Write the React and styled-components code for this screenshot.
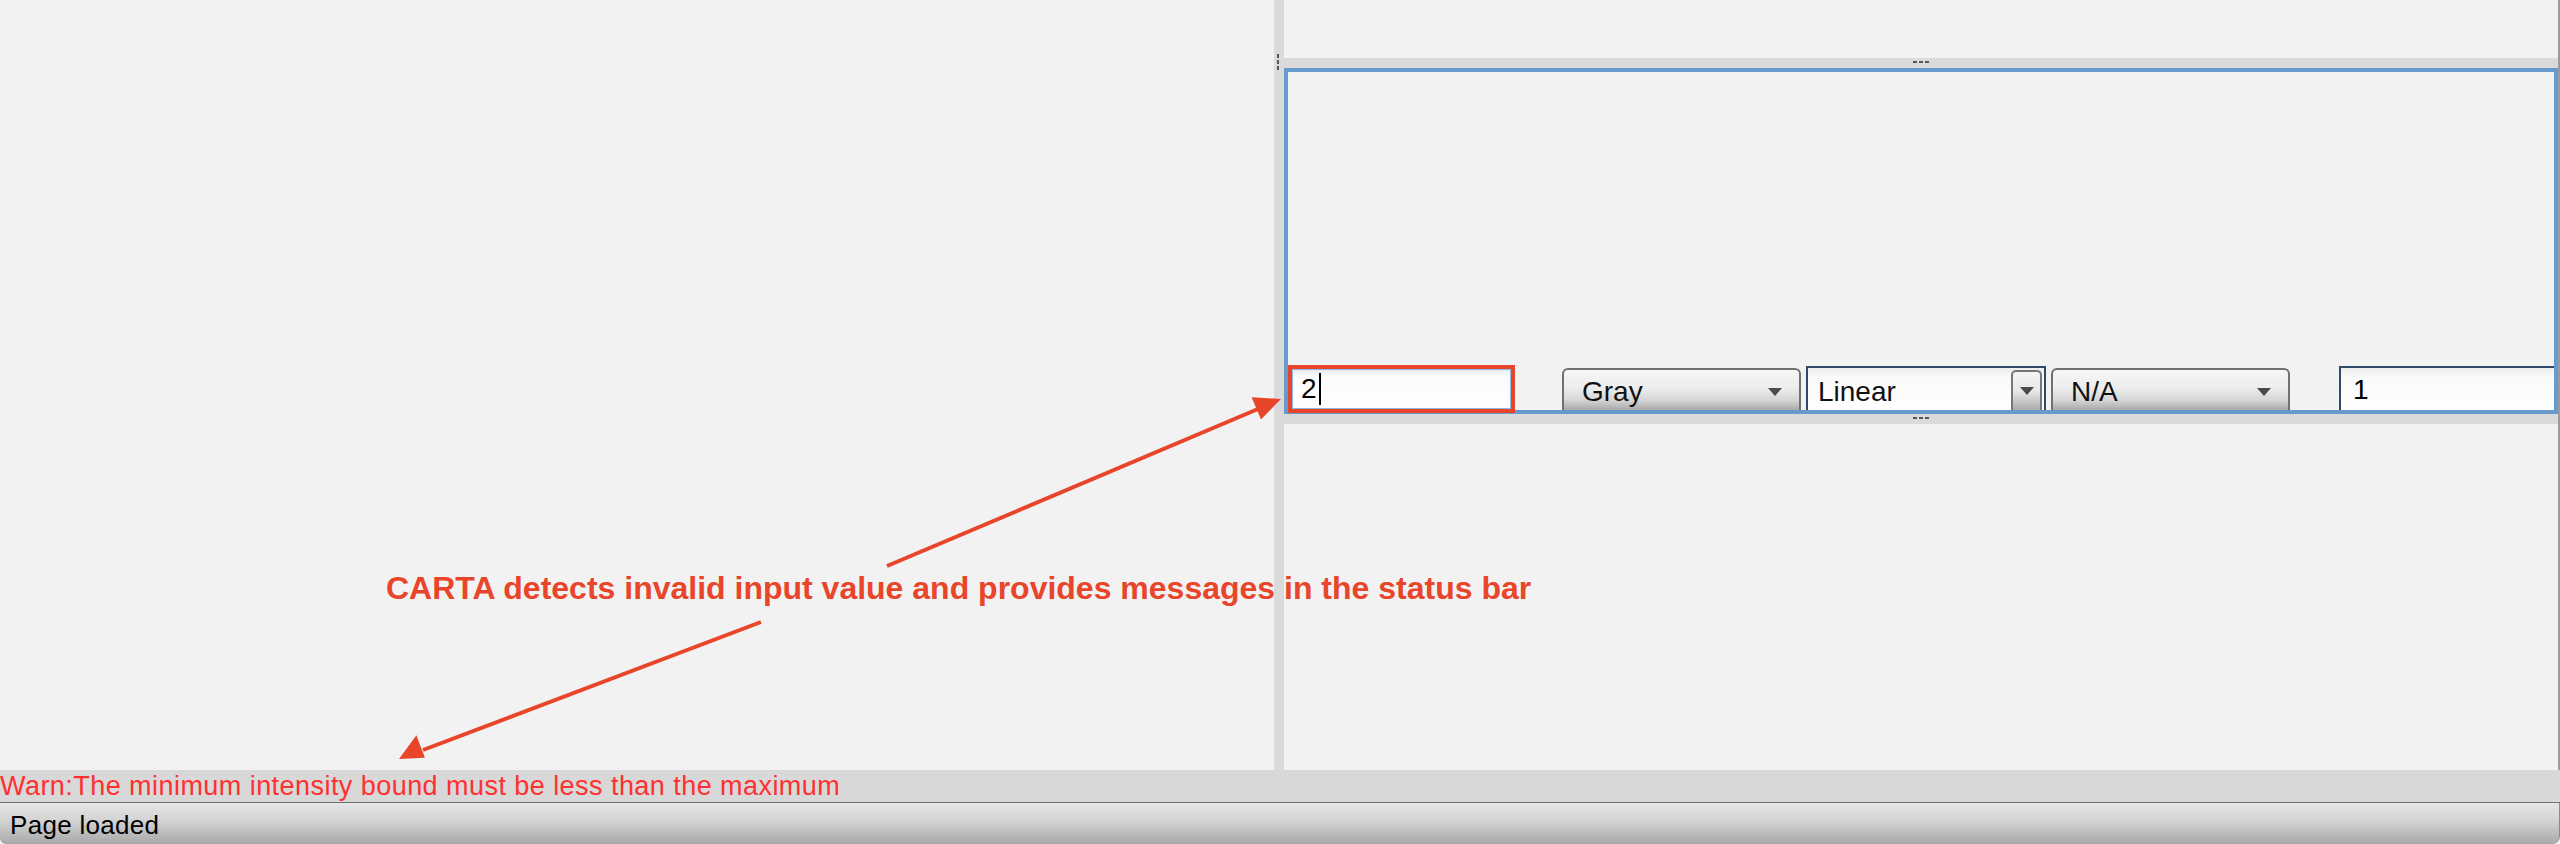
import styled, { createGlobalStyle } from 'styled-components';

const GlobalStyle = createGlobalStyle`
    html, body {
        margin: 0;
        padding: 0;
        background: #f2f2f2;
        font-family: "Liberation Sans", Arial, sans-serif;
    }
    * {
        box-sizing: border-box;
    }
`;

const RED = '#e8452a';

export default function App() {
    return (
        <Page>
            <GlobalStyle />
            <Main>
                <LeftPanel />
                <VDivider>
                    <VGrip />
                </VDivider>
                <RightPanel>
                    <TopPane />
                    <HDivider>
                        <HGrip />
                    </HDivider>
                    <ColormapBox>
                        <ControlRow>
                            <ErrorInput>
                                <InputText>2</InputText>
                                <Caret />
                            </ErrorInput>
                            <Dropdown $gap={47}>
                                <DropText>Gray</DropText>
                                <Arrow />
                            </Dropdown>
                            <Combo $gap={5}>
                                <ComboText>Linear</ComboText>
                                <ComboButton>
                                    <Arrow />
                                </ComboButton>
                            </Combo>
                            <Dropdown $gap={5}>
                                <DropText>N/A</DropText>
                                <Arrow />
                            </Dropdown>
                            <ValueInput $gap={49}>
                                <InputText>1</InputText>
                            </ValueInput>
                        </ControlRow>
                    </ColormapBox>
                    <HDivider>
                        <HGrip />
                    </HDivider>
                    <BottomPane />
                </RightPanel>
                <EdgeLine />
            </Main>
            <WarnBar>Warn:The minimum intensity bound must be less than the maximum</WarnBar>
            <StatusBar>Page loaded</StatusBar>

            <Callout>CARTA detects invalid input value and provides messages in the status bar</Callout>
            <ArrowLayer width="2560" height="844" viewBox="0 0 2560 844">
                <line x1="887" y1="566" x2="1258" y2="409" stroke={RED} strokeWidth="4" />
                <polygon points="1281,399 1251.6,397.3 1261.0,419.4" fill={RED} />
                <line x1="761" y1="622" x2="423" y2="750" stroke={RED} strokeWidth="4" />
                <polygon points="399,759 416.4,735.2 424.9,757.7" fill={RED} />
            </ArrowLayer>
        </Page>
    );
}

const Page = styled.div`
    position: relative;
    width: 2560px;
    height: 844px;
    display: flex;
    flex-direction: column;
    overflow: hidden;
    background: #f2f2f2;
`;

const Main = styled.div`
    height: 770px;
    display: flex;
`;

const LeftPanel = styled.div`
    width: 1274px;
    background: #f2f2f2;
`;

const VDivider = styled.div`
    width: 10px;
    background: #dadada;
    display: flex;
    flex-direction: column;
    align-items: center;
    padding-top: 54px;
`;

const VGrip = styled.div`
    width: 2px;
    height: 16px;
    margin-left: -2px;
    background: repeating-linear-gradient(#555 0 4px, transparent 4px 6px);
`;

const RightPanel = styled.div`
    width: 1274px;
    display: flex;
    flex-direction: column;
`;

const TopPane = styled.div`
    height: 58px;
`;

const HDivider = styled.div`
    height: 10px;
    background: #dadada;
    display: flex;
    justify-content: center;
    padding-top: 3px;
`;

const HGrip = styled.div`
    width: 16px;
    height: 2px;
    background: repeating-linear-gradient(90deg, #555 0 4px, transparent 4px 6px);
`;

const ColormapBox = styled.div`
    height: 346px;
    border: 4px solid #6699cc;
    display: flex;
    align-items: flex-end;
`;

const ControlRow = styled.div`
    width: 100%;
    display: flex;
    align-items: flex-end;
`;

const ErrorInput = styled.div`
    width: 227px;
    height: 48px;
    margin-bottom: -3px;
    border: 4px solid ${RED};
    box-shadow: inset 0 0 0 1px #8fb8e6;
    background: linear-gradient(#e6ebf0 0, #fbfbfb 8px, #ffffff 100%);
    display: flex;
    align-items: center;
    padding-left: 9px;
`;

const InputText = styled.span`
    font-size: 28px;
    color: #000;
`;

const Caret = styled.span`
    width: 2px;
    height: 32px;
    margin-left: 2px;
    background: #000;
`;

const Dropdown = styled.div`
    width: 239px;
    height: 42px;
    margin-left: ${(p) => p.$gap}px;
    border: 2px solid #707070;
    border-bottom: none;
    border-radius: 6px 6px 0 0;
    background: linear-gradient(#f6f6f6 0%, #ededed 45%, #d6d6d6 75%, #a9a9a9 100%);
    display: flex;
    align-items: center;
    justify-content: space-between;
    padding: 4px 17px 0 18px;
`;

const DropText = styled.span`
    font-size: 28px;
    color: #111;
`;

const Arrow = styled.span`
    width: 0;
    height: 0;
    border-left: 7.5px solid transparent;
    border-right: 7.5px solid transparent;
    border-top: 8px solid #4a4a4a;
`;

const Combo = styled.div`
    width: 240px;
    height: 44px;
    margin-left: ${(p) => p.$gap}px;
    border: 2px solid #2f4a6a;
    border-bottom: none;
    background: linear-gradient(#eeeeee 0, #fafafa 10px, #ffffff 100%);
    display: flex;
    align-items: flex-end;
    justify-content: space-between;
    padding: 0 2px 0 10px;
`;

const ComboText = styled.span`
    align-self: center;
    padding-top: 6px;
    font-size: 28px;
    color: #111;
`;

const ComboButton = styled.div`
    width: 31px;
    height: 40px;
    border: 2px solid #777;
    border-bottom: none;
    border-radius: 5px 5px 0 0;
    background: linear-gradient(#f4f4f4 0%, #e8e8e8 50%, #ababab 100%);
    display: flex;
    align-items: center;
    justify-content: center;
`;

const ValueInput = styled.div`
    flex: 1;
    height: 44px;
    margin-left: ${(p) => p.$gap}px;
    border: 2px solid #2f4a6a;
    border-right: none;
    border-bottom: none;
    background: linear-gradient(#eeeeee 0, #fafafa 10px, #ffffff 100%);
    display: flex;
    align-items: center;
    padding: 2px 0 0 12px;
`;

const BottomPane = styled.div`
    flex: 1;
`;

const EdgeLine = styled.div`
    width: 2px;
    background: #9a9a9a;
`;

const WarnBar = styled.div`
    height: 33px;
    line-height: 32px;
    background: #d8d8d8;
    border-bottom: 1px solid #707070;
    color: #ff3030;
    font-size: 27px;
    letter-spacing: 0.45px;
    white-space: nowrap;
`;

const StatusBar = styled.div`
    flex: 1;
    display: flex;
    align-items: center;
    padding: 4px 0 0 10px;
    background: linear-gradient(#e6e6e6 0%, #d2d2d2 45%, #a8a8a8 100%);
    border-right: 1px solid #8a8a8a;
    border-radius: 0 0 8px 6px;
    font-size: 26px;
    letter-spacing: 0.3px;
    color: #000;
`;

const Callout = styled.div`
    position: absolute;
    left: 386px;
    top: 572px;
    font-size: 32px;
    line-height: 32px;
    font-weight: 700;
    color: ${RED};
    white-space: nowrap;
`;

const ArrowLayer = styled.svg`
    position: absolute;
    left: 0;
    top: 0;
    pointer-events: none;
`;
